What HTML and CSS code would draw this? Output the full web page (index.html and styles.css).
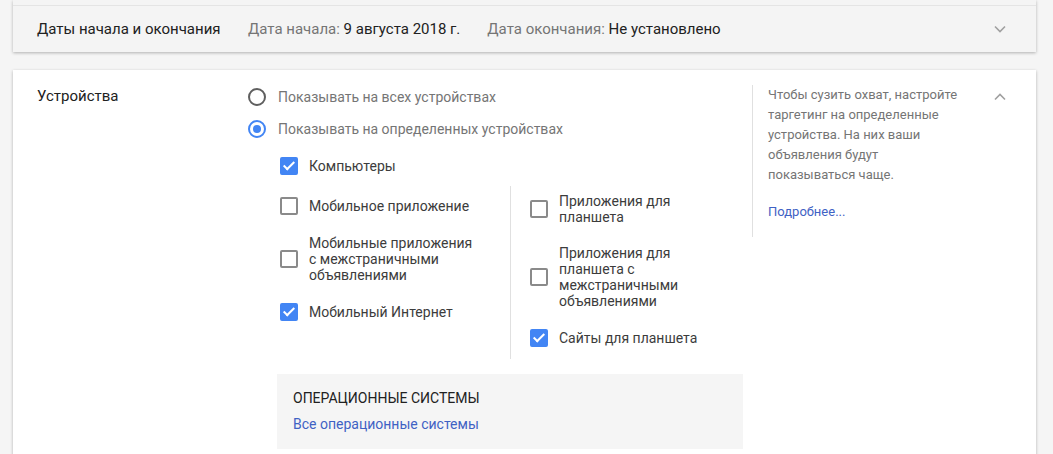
FILE: index.html
```html
<!DOCTYPE html>
<html lang="ru">
<head>
    <meta charset="UTF-8">
    <meta name="viewport" content="width=device-width, initial-scale=1.0">
    <title>Настройки кампании</title>
    <link rel="stylesheet" href="styles.css">
</head>
<body>
    <div class="card card-closed">
        <div class="card-prev"></div>
        <div class="summary">
            <div class="section-title">Даты начала и окончания</div>
            <div class="summary-item"><span class="muted">Дата начала:</span> 9 августа 2018 г.</div>
            <div class="summary-item"><span class="muted">Дата окончания:</span> Не установлено</div>
            <svg class="chevron" width="12" height="8" viewBox="0 0 12 8"><path d="M1 1.5l5 5 5-5" fill="none" stroke="#a0a0a0" stroke-width="1.6"/></svg>
        </div>
    </div>

    <div class="card card-open">
        <div class="section-title devices-title">Устройства</div>

        <div class="options">
            <div class="radio-row">
                <span class="radio"></span>
                <span class="option-text">Показывать на всех устройствах</span>
            </div>
            <div class="radio-row">
                <span class="radio checked"></span>
                <span class="option-text">Показывать на определенных устройствах</span>
            </div>

            <div class="devices">
                <div class="check-row first">
                    <span class="checkbox checked"></span>
                    <span class="check-text">Компьютеры</span>
                </div>

                <div class="columns">
                    <div class="col col-left">
                        <div class="check-row">
                            <span class="checkbox"></span>
                            <span class="check-text">Мобильное приложение</span>
                        </div>
                        <div class="check-row">
                            <span class="checkbox"></span>
                            <span class="check-text">Мобильные приложения с межстраничными объявлениями</span>
                        </div>
                        <div class="check-row">
                            <span class="checkbox checked"></span>
                            <span class="check-text">Мобильный Интернет</span>
                        </div>
                    </div>
                    <div class="col col-right">
                        <div class="check-row">
                            <span class="checkbox"></span>
                            <span class="check-text">Приложения для планшета</span>
                        </div>
                        <div class="check-row">
                            <span class="checkbox"></span>
                            <span class="check-text">Приложения для планшета с межстраничными объявлениями</span>
                        </div>
                        <div class="check-row">
                            <span class="checkbox checked"></span>
                            <span class="check-text">Сайты для планшета</span>
                        </div>
                    </div>
                </div>

                <div class="os-box">
                    <div class="os-title">ОПЕРАЦИОННЫЕ СИСТЕМЫ</div>
                    <a class="link" href="#">Все операционные системы</a>
                </div>
            </div>
        </div>

        <div class="help">
            <p>Чтобы сузить охват, настройте таргетинг на определенные устройства. На них ваши объявления будут показываться чаще.</p>
            <a class="link small" href="#">Подробнее...</a>
        </div>

        <svg class="chevron up" width="12" height="8" viewBox="0 0 12 8"><path d="M1 6.5l5-5 5 5" fill="none" stroke="#a0a0a0" stroke-width="1.6"/></svg>
    </div>
</body>
</html>
```

FILE: styles.css
```css
/* Настройки кампании */
body {
    margin: 0;
    padding: 0 17px 0 13px;
    background-color: #f5f5f5;
    font-family: Roboto, "Noto Sans", Arial, sans-serif;
    color: #212121;
}
.card {
    box-shadow: 0 1px 3px rgba(0, 0, 0, 0.28);
}
.card-closed {
    background: #f4f4f4;
}
.card-prev {
    height: 5px;
    border-bottom: 1px solid #e4e4e4;
}
.summary {
    display: flex;
    align-items: center;
    height: 46px;
    padding: 0 30px 0 24px;
    font-size: 15px;
}
.section-title {
    width: 211px;
    flex-shrink: 0;
    font-size: 15px;
    line-height: 20px;
    color: #212121;
}
.summary-item {
    margin-right: 27px;
    color: #212121;
}
.muted {
    color: #757575;
}
.chevron {
    margin-left: auto;
    display: block;
}
.card-open {
    margin-top: 18px;
    background: #fff;
    display: flex;
    align-items: flex-start;
    padding: 15px 30px 20px 24px;
}
.devices-title {
    padding-top: 1px;
}
.options {
    width: 495px;
    flex-shrink: 0;
}
.radio-row {
    display: flex;
    align-items: center;
    height: 24px;
    margin-bottom: 8px;
}
.radio {
    width: 14px;
    height: 14px;
    border: 2px solid #5f5f5f;
    border-radius: 50%;
    margin-right: 12px;
    flex-shrink: 0;
    position: relative;
}
.radio.checked {
    border-color: #4285f4;
}
.radio.checked::after {
    content: "";
    position: absolute;
    left: 3px;
    top: 3px;
    width: 8px;
    height: 8px;
    border-radius: 50%;
    background: #4285f4;
}
.option-text {
    font-size: 14px;
    color: #757575;
}
.devices {
    padding-left: 32px;
    margin-top: 16px;
}
.check-row {
    display: flex;
    align-items: center;
    min-height: 18px;
}
.check-row.first {
    margin-bottom: 11px;
}
.checkbox {
    width: 14px;
    height: 14px;
    border: 2px solid #8a8a8a;
    border-radius: 2px;
    flex-shrink: 0;
    margin-right: 11px;
    position: relative;
}
.checkbox.checked {
    background: #4285f4;
    border-color: #4285f4;
}
.checkbox.checked::after {
    content: "";
    position: absolute;
    left: 4px;
    top: 0px;
    width: 4px;
    height: 9px;
    border: solid #fff;
    border-width: 0 2px 2px 0;
    transform: rotate(45deg);
}
.check-text {
    font-size: 14px;
    line-height: 16px;
    color: #3c3c3c;
}
.columns {
    display: flex;
    align-items: flex-start;
}
.col {
    display: flex;
    flex-direction: column;
    padding: 11px 0 12px;
}
.col-left {
    width: 198px;
    gap: 20px;
    padding-right: 32px;
    border-right: 1px solid #e0e0e0;
    align-self: stretch;
}
.col-right {
    width: 170px;
    gap: 20px;
    padding-top: 7px;
    padding-left: 19px;
}
.os-box {
    margin: 15px 0 0 -3px;
    width: 434px;
    padding: 14px 16px 15px;
    background: #f5f5f5;
}
.os-title {
    font-size: 14px;
    line-height: 20px;
    color: #212121;
    margin-bottom: 6px;
}
.link {
    display: block;
    font-size: 14px;
    line-height: 20px;
    color: #3f62c4;
    text-decoration: none;
}
.help {
    margin-left: 9px;
    width: 200px;
    border-left: 1px solid #e0e0e0;
    padding: 0 0 15px 15px;
}
.help p {
    margin: 0 0 17px;
    font-size: 13px;
    line-height: 20px;
    color: #757575;
}
.link.small {
    font-size: 13px;
}
.chevron.up {
    margin-top: 8px;
}
```
